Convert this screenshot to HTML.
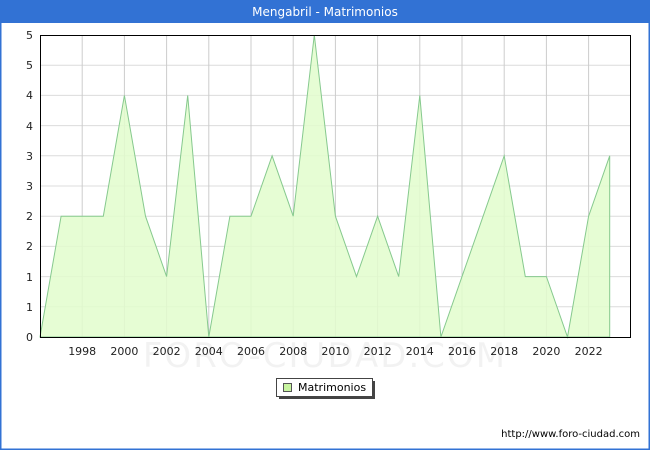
<!DOCTYPE html>
<html><head><style>
body{margin:0;width:650px;height:450px;overflow:hidden;background:#fff;font-family:"DejaVu Sans","Liberation Sans",sans-serif;}
</style></head><body>
<svg width="650" height="450" xmlns="http://www.w3.org/2000/svg" font-family="DejaVu Sans, Liberation Sans, sans-serif">
<rect x="0" y="0" width="650" height="450" fill="#fff"/>
<rect x="0.5" y="0.5" width="649" height="449" fill="none" stroke="#3272d4" stroke-width="2"/>
<rect x="0" y="0" width="650" height="23" fill="#3272d4"/>
<text x="325" y="16" text-anchor="middle" fill="#fff" font-size="12">Mengabril - Matrimonios</text>
<g stroke="#dcdcdc" stroke-width="1">
<line x1="40" x2="630" y1="65.2" y2="65.2"/><line x1="40" x2="630" y1="95.4" y2="95.4"/><line x1="40" x2="630" y1="125.6" y2="125.6"/><line x1="40" x2="630" y1="155.8" y2="155.8"/><line x1="40" x2="630" y1="186" y2="186"/><line x1="40" x2="630" y1="216.2" y2="216.2"/><line x1="40" x2="630" y1="246.4" y2="246.4"/><line x1="40" x2="630" y1="276.6" y2="276.6"/><line x1="40" x2="630" y1="306.8" y2="306.8"/>
</g>
<g stroke="#cccccc" stroke-width="1">
<line x1="82.2" x2="82.2" y1="35" y2="337"/><line x1="124.4" x2="124.4" y1="35" y2="337"/><line x1="166.6" x2="166.6" y1="35" y2="337"/><line x1="208.8" x2="208.8" y1="35" y2="337"/><line x1="251" x2="251" y1="35" y2="337"/><line x1="293.2" x2="293.2" y1="35" y2="337"/><line x1="335.4" x2="335.4" y1="35" y2="337"/><line x1="377.6" x2="377.6" y1="35" y2="337"/><line x1="419.8" x2="419.8" y1="35" y2="337"/><line x1="462" x2="462" y1="35" y2="337"/><line x1="504.2" x2="504.2" y1="35" y2="337"/><line x1="546.4" x2="546.4" y1="35" y2="337"/><line x1="588.6" x2="588.6" y1="35" y2="337"/>
</g>
<polygon fill="#e2fdcc" fill-opacity="0.85" stroke="#86c98e" stroke-width="1" points="40,337 61.1,216.2 82.2,216.2 103.3,216.2 124.4,95.4 145.5,216.2 166.6,276.6 187.7,95.4 208.8,337 229.9,216.2 251,216.2 272.1,155.8 293.2,216.2 314.3,35 335.4,216.2 356.5,276.6 377.6,216.2 398.7,276.6 419.8,95.4 440.9,337 462,276.6 483.1,216.2 504.2,155.8 525.3,276.6 546.4,276.6 567.5,337 588.6,216.2 609.7,155.8 609.7,337"/>
<text x="325" y="367" text-anchor="middle" font-size="34" fill="#000" fill-opacity="0.05" letter-spacing="2">FORO-CIUDAD.COM</text>
<rect x="40.5" y="35.5" width="590" height="302" fill="none" stroke="#000" stroke-width="1"/>
<g font-size="11" fill="#222" text-anchor="end">
<text x="33" y="341">0</text><text x="33" y="311">1</text><text x="33" y="281">1</text><text x="33" y="250">2</text><text x="33" y="220">2</text><text x="33" y="190">3</text><text x="33" y="160">3</text><text x="33" y="130">4</text><text x="33" y="99">4</text><text x="33" y="69">5</text><text x="33" y="39">5</text>
</g>
<g font-size="11" fill="#222" text-anchor="middle">
<text x="82.2" y="355">1998</text><text x="124.4" y="355">2000</text><text x="166.6" y="355">2002</text><text x="208.8" y="355">2004</text><text x="251" y="355">2006</text><text x="293.2" y="355">2008</text><text x="335.4" y="355">2010</text><text x="377.6" y="355">2012</text><text x="419.8" y="355">2014</text><text x="462" y="355">2016</text><text x="504.2" y="355">2018</text><text x="546.4" y="355">2020</text><text x="588.6" y="355">2022</text>
</g>
<rect x="279" y="381" width="96" height="18" fill="#444"/>
<rect x="276.5" y="378.5" width="96" height="18" fill="#fff" stroke="#444"/>
<rect x="283.5" y="383.5" width="8" height="8" fill="#c8f5a0" stroke="#555"/>
<text x="298" y="391" font-size="11" fill="#000">Matrimonios</text>
<text x="640" y="437" font-size="10" fill="#000" text-anchor="end">http://www.foro-ciudad.com</text>
</svg>
</body></html>
